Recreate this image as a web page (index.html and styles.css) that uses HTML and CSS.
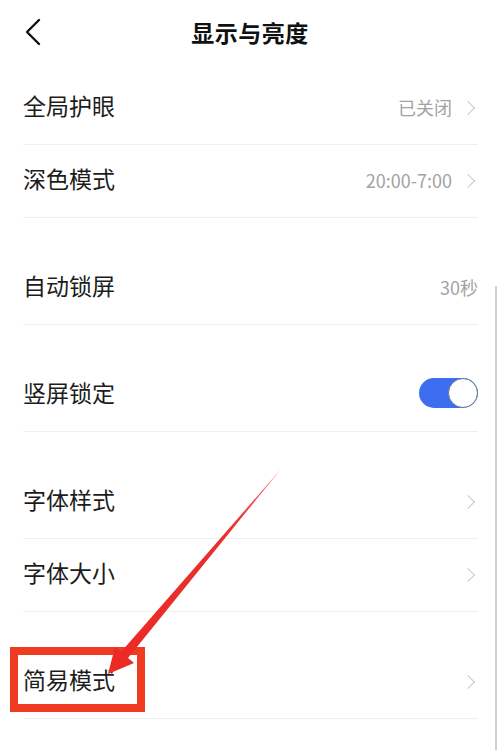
FILE: index.html
```html
<!DOCTYPE html>
<html lang="zh-CN">
<head>
    <meta charset="UTF-8">
    <meta name="viewport" content="width=device-width, initial-scale=1.0">
    <title>显示与亮度</title>
    <link rel="stylesheet" href="styles.css">
</head>
<body>
    <div class="screen">
        <header class="topbar">
            <div class="back">
                <svg width="20" height="30" viewBox="0 0 20 30">
                    <polyline points="14,3 2,15 14,27" fill="none" stroke="#111" stroke-width="2.4" stroke-linecap="round" stroke-linejoin="round"/>
                </svg>
            </div>
            <h1>显示与亮度</h1>
            <div></div>
        </header>

        <section class="group">
            <div class="row">
                <span class="label">全局护眼</span>
                <span class="value">已关闭</span>
                <span class="chev"></span>
            </div>
            <div class="row">
                <span class="label">深色模式</span>
                <span class="value">20:00-7:00</span>
                <span class="chev"></span>
            </div>
        </section>

        <section class="group">
            <div class="row">
                <span class="label">自动锁屏</span>
                <span class="value">30秒</span>
            </div>
        </section>

        <section class="group">
            <div class="row">
                <span class="label">竖屏锁定</span>
                <span class="toggle on"><span class="knob"></span></span>
            </div>
        </section>

        <section class="group">
            <div class="row">
                <span class="label">字体样式</span>
                <span class="chev"></span>
            </div>
            <div class="row">
                <span class="label">字体大小</span>
                <span class="chev"></span>
            </div>
        </section>

        <section class="group">
            <div class="row">
                <span class="label">简易模式</span>
                <span class="chev"></span>
            </div>
        </section>

        <div class="scrollbar"></div>

        <!-- annotation -->
        <div class="mark-box"></div>
        <svg class="mark-arrow" width="500" height="750" viewBox="0 0 500 750">
            <defs>
                <linearGradient id="arrowFill" x1="281" y1="469" x2="108" y2="674" gradientUnits="userSpaceOnUse">
                    <stop offset="0" stop-color="#f06a6a"/>
                    <stop offset="0.3" stop-color="#e8302e"/>
                    <stop offset="1" stop-color="#ec2a26"/>
                </linearGradient>
            </defs>
            <polygon points="281,469 128,658 134,663 108,674 115,647 121,652" fill="url(#arrowFill)"/>
        </svg>
    </div>
</body>
</html>
```

FILE: styles.css
```css
* {
    box-sizing: border-box;
}
body {
    margin: 0;
    background-color: #fff;
    font-family: "Noto Sans CJK SC", "Noto Sans", sans-serif;
    color: #1c1c1c;
}
.screen {
    position: relative;
    width: 500px;
    height: 750px;
    overflow: hidden;
    background-color: #fff;
}
.topbar {
    height: 72px;
    padding-bottom: 8px;
    display: grid;
    grid-template-columns: 70px 1fr 70px;
    align-items: center;
}
.back {
    padding-left: 25px;
    display: flex;
    align-items: center;
}
.topbar h1 {
    margin: 0;
    text-align: center;
    font-size: 23px;
    font-weight: 700;
    color: #111;
    letter-spacing: 0.5px;
}
.group {
    padding: 0 22px 0 23px;
}
.group + .group {
    margin-top: 34px;
}
.row {
    height: 73px;
    display: flex;
    align-items: center;
    border-bottom: 1px solid #efefef;
}
.label {
    flex: 1;
    font-size: 23px;
    color: #1c1c1c;
    padding-bottom: 6px;
}
.value {
    font-size: 18px;
    color: #a3a3a3;
    padding-bottom: 3px;
}
.chev {
    width: 26px;
    height: 18px;
    display: flex;
    justify-content: flex-end;
    align-items: center;
    padding-right: 5px;
}
.chev::after {
    content: "";
    width: 9px;
    height: 9px;
    border-top: 1.6px solid #c9c9c9;
    border-right: 1.6px solid #c9c9c9;
    transform: rotate(45deg);
}
.toggle {
    width: 59px;
    height: 30px;
    border-radius: 15px;
    background-color: #3d6ef0;
    display: flex;
    justify-content: flex-end;
    margin-top: -5px;
}
.knob {
    width: 30px;
    height: 30px;
    border-radius: 50%;
    background-color: #fff;
    border: 1.5px solid #6a7793;
}
.scrollbar {
    position: absolute;
    right: 3px;
    top: 286px;
    bottom: 0;
    width: 2px;
    background-color: #cfcfcf;
}
.mark-box {
    position: absolute;
    left: 10px;
    top: 647px;
    width: 135px;
    height: 65px;
    border: 8px solid #ee3b22;
}
.mark-arrow {
    position: absolute;
    left: 0;
    top: 0;
}
```
